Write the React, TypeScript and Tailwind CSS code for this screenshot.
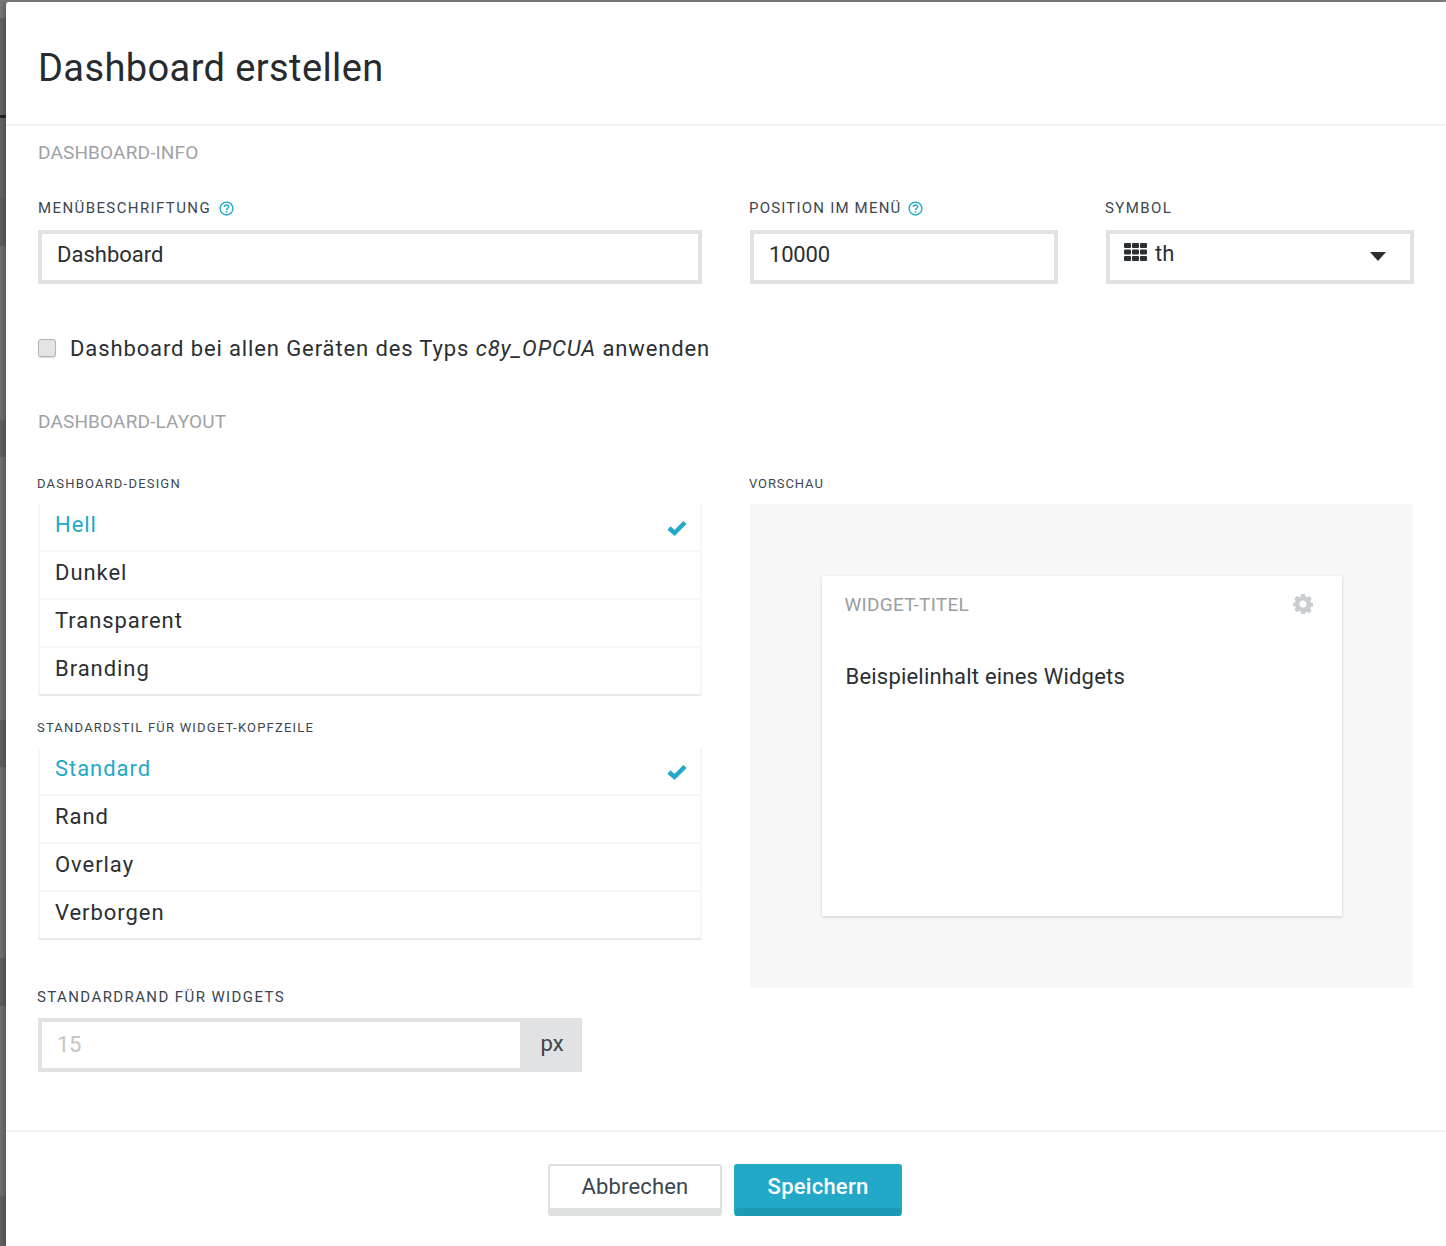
import React from "react";

const font = { fontFamily: '"Roboto", "Liberation Sans", sans-serif' };

function Help() {
  return (
    <svg width="15" height="15" viewBox="0 0 14 14" className="shrink-0">
      <circle cx="7" cy="7" r="6" fill="none" stroke="#22a9c8" strokeWidth="1.3" />
      <path d="M5 5.500C5 4.300 5.900 3.700 7 3.700s2 .7 2 1.700c0 1.400-2 1.500-2 3" fill="none" stroke="#22a9c8" strokeWidth="1.300" />
      <rect x="6.300" y="9.400" width="1.400" height="1.400" fill="#22a9c8" />
    </svg>
  );
}

function Check() {
  return (
    <svg width="22" height="18" viewBox="0 0 22 18">
      <path d="M3 9l5.500 5L19 3.500" fill="none" stroke="#22a9c8" strokeWidth="4.500" />
    </svg>
  );
}

function Section({ children }: { children: React.ReactNode }) {
  return <div className="text-[19px] leading-6 text-[#9ea2a6] tracking-[0.15px]">{children}</div>;
}

function Label({ children, small }: { children: React.ReactNode; small?: boolean }) {
  return (
    <div className={small ? "text-[13px] leading-5 tracking-[1.2px] text-[#3c4650] uppercase" : "text-[15px] leading-5 tracking-[1.4px] text-[#3c4650] uppercase"}>
      {children}
    </div>
  );
}

function List({ items }: { items: string[] }) {
  return (
    <div className="border-l-2 border-r-2 border-b-2 border-l-[#f6f6f6] border-r-[#f6f6f6] border-b-[#e8e8e8]">
      {items.map((t, i) => (
        <div
          key={t}
          className={
            "flex items-center justify-between pl-[15px] pr-[12px] pb-[6px] text-[22px] tracking-[0.95px] " +
            (i < items.length - 1 ? "h-12 border-b-2 border-[#f6f6f6] " : "h-[46px] ") +
            (i === 0 ? "text-[#22a9c8]" : "text-[#2b2f33]")
          }
        >
          <span>{t}</span>
          {i === 0 && (
            <span className="mt-[8px] flex">
              <Check />
            </span>
          )}
        </div>
      ))}
    </div>
  );
}

function Gear() {
  return (
    <svg width="20" height="20" viewBox="0 0 20 20" className="mb-[2px]">
      <path
        fill="#c9cdcf"
        fillRule="evenodd"
        d="M8 0h4l.5 2.600 1.500.7L16.300 2 18.800 4.800 17.300 7l.6 1.500L20 9v3.500l-2.200.5-.6 1.400 1.400 2.200-2.500 2.600-2.200-1.400-1.400.6L12 20H8l-.5-2.600-1.500-.6-2.200 1.400-2.500-2.600 1.400-2.200-.6-1.400L0 12.500V9l2.100-.5.600-1.500L1.200 4.800 3.700 2 6 3.300l1.500-.7z M10 6.500a3.500 3.500 0 1 0 0 7 3.500 3.500 0 0 0 0-7z"
      />
    </svg>
  );
}

function Strip() {
  return (
    <div className="flex w-[6px] shrink-0 flex-col">
      <div className="h-[18px] bg-[#7a7a7a]" />
      <div className="h-[97px] bg-[#666666]" />
      <div className="h-[3px] bg-[#1f2a2c]" />
      <div className="h-[80px] bg-[#666666]" />
      <div className="h-[48px] bg-[#606060]" />
      <div className="h-[174px] bg-[#727272]" />
      <div className="h-[37px] bg-[#646464]" />
      <div className="h-[263px] bg-[#727272]" />
      <div className="h-[47px] bg-[#626262]" />
      <div className="h-[191px] bg-[#727272]" />
      <div className="h-[48px] bg-[#626262]" />
      <div className="h-[190px] bg-[#727272]" />
      <div className="flex-1 bg-[#646464]" />
    </div>
  );
}

export default function App() {
  return (
    <div style={font} className="flex h-[1246px] w-[1446px] overflow-hidden bg-[#808080] text-[#2b2f33]">
      <Strip />
      <div className="relative mt-[2px] flex h-[1244px] flex-1 flex-col rounded-tl-[3px] bg-white shadow-[-3px_0_5px_rgba(0,0,0,0.22)]">
        <div className="flex h-[124px] shrink-0 items-center border-b-2 border-[#f3f3f3] pl-8 pt-[10px] text-[38px] tracking-[0.4px] text-[#272b30]">
          Dashboard erstellen
        </div>

        <div className="flex h-[1004px] shrink-0 flex-col pl-8 pr-8">
          <div className="pt-[15px]">
            <Section>DASHBOARD-INFO</Section>
          </div>

          <div className="mt-[33px] flex gap-12">
            <div className="w-[664px]">
              <div className="flex h-5 items-center gap-2">
                <Label>Menübeschriftung</Label>
                <Help />
              </div>
              <div className="mt-3 flex h-[54px] items-center border-4 border-[#e1e2e3] pl-[15px] pb-[6px] text-[22px] tracking-[0px]">
                Dashboard
              </div>
            </div>
            <div className="w-[308px]">
              <div className="-ml-px flex h-5 items-center gap-[7px] text-[15px] leading-5 tracking-[1.2px] text-[#3c4650] uppercase">
                <span>Position im Menü</span>
                <Help />
              </div>
              <div className="mt-3 flex h-[54px] items-center border-4 border-[#e1e2e3] pl-[15px] pb-[6px] text-[22px] tracking-[-0.2px]">
                10000
              </div>
            </div>
            <div className="w-[308px]">
              <div className="-ml-px flex h-5 items-center">
                <Label>Symbol</Label>
              </div>
              <div className="mt-3 flex h-[54px] items-center justify-between border-4 border-[#e1e2e3] pl-[14px] pr-[24px] pb-[8px] text-[22px]">
                <div className="flex items-center gap-2">
                  <svg width="23" height="18" viewBox="0 0 23 18" className="-mt-[2px]">
                    <g fill="#2b2f33">
                      <rect x="0" y="0" width="7" height="5" rx="1" />
                      <rect x="8" y="0" width="7" height="5" rx="1" />
                      <rect x="16" y="0" width="7" height="5" rx="1" />
                      <rect x="0" y="6.500" width="7" height="5" rx="1" />
                      <rect x="8" y="6.500" width="7" height="5" rx="1" />
                      <rect x="16" y="6.500" width="7" height="5" rx="1" />
                      <rect x="0" y="13" width="7" height="5" rx="1" />
                      <rect x="8" y="13" width="7" height="5" rx="1" />
                      <rect x="16" y="13" width="7" height="5" rx="1" />
                    </g>
                  </svg>
                  <span>th</span>
                </div>
                <svg width="16" height="9" viewBox="0 0 16 9" className="mt-[6px]">
                  <path d="M0 0h16L8 9z" fill="#2b2f33" />
                </svg>
              </div>
            </div>
          </div>

          <div className="mt-[52px] flex h-6 items-center">
            <div className="box-border h-[18px] w-[18px] rounded-[3px] border border-[#b4b4b4] bg-[#e4e4e4] shadow-[0_1px_1px_rgba(0,0,0,0.15)]" />
            <div className="ml-[14px] text-[22px] tracking-[0.88px]">
              Dashboard bei allen Geräten des Typs <i>c8y_OPCUA</i> anwenden
            </div>
          </div>

          <div className="mt-[50px]">
            <Section>DASHBOARD-LAYOUT</Section>
          </div>

          <div className="mt-[40px] flex gap-12">
            <div className="w-[664px]">
              <div className="-ml-px mb-[10px]">
                <Label small>Dashboard-Design</Label>
              </div>
              <List items={["Hell", "Dunkel", "Transparent", "Branding"]} />
              <div className="-ml-px mt-[22px] mb-[10px]">
                <Label small>Standardstil für Widget-Kopfzeile</Label>
              </div>
              <List items={["Standard", "Rand", "Overlay", "Verborgen"]} />
              <div className="-ml-px mt-[47px]">
                <Label>Standardrand für Widgets</Label>
              </div>
              <div className="mt-[11px] flex h-[54px] w-[544px] border-4 border-[#e1e2e3]">
                <div className="flex flex-1 items-center bg-white pl-[15px] pb-[2px] text-[22px] tracking-[-0.4px] text-[#c4c4c4]">15</div>
                <div className="flex w-[58px] items-center justify-center bg-[#e1e2e3] pl-[6px] pb-[4px] text-[22px] text-[#3c4650]">px</div>
              </div>
            </div>

            <div className="w-[664px]">
              <div className="-ml-px mb-[10px] text-[13px] leading-5 tracking-[0.9px] text-[#3c4650] uppercase">Vorschau</div>
              <div className="flex h-[484px] w-[663px] items-start justify-center bg-[#f7f7f7] pt-[72px]">
                <div className="h-[340px] w-[520px] bg-white px-6 shadow-[0_1px_3px_rgba(0,0,0,0.18)]">
                  <div className="flex h-[58px] items-center justify-between pr-[5px]">
                    <div className="-ml-px text-[19px] tracking-[0.25px] text-[#9a9ea1]">WIDGET-TITEL</div>
                    <Gear />
                  </div>
                  <div className="mt-[31px] text-[22px] leading-6 tracking-[0.2px]">Beispielinhalt eines Widgets</div>
                </div>
              </div>
            </div>
          </div>
        </div>

        <div className="flex flex-1 justify-center gap-3 border-t-2 border-[#f3f3f3] pt-[32px]">
          <div className="-ml-[2px] flex h-[52px] w-[174px] items-center justify-center rounded-[3px] border-2 border-b-[8px] border-[#dfe1e1] bg-white pb-[2px] text-[22px] tracking-[0.15px] text-[#3c4650]">
            Abbrechen
          </div>
          <div className="flex h-[52px] w-[168px] items-center justify-center rounded-[3px] border-2 border-b-[8px] border-[#22a9c8] border-b-[#1d99b6] bg-[#22a9c8] pb-[2px] text-[22px] font-medium tracking-[0.25px] text-white">
            Speichern
          </div>
        </div>
      </div>
    </div>
  );
}
